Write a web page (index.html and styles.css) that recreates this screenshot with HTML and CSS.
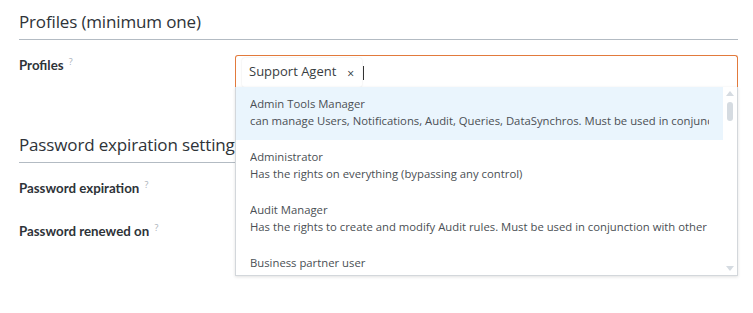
FILE: index.html
```html
<!DOCTYPE html>
<html>
<head>
<meta charset="utf-8">
<link rel="stylesheet" href="styles.css">
</head>
<body>
<div class="page">
  <section class="section">
    <h2 class="section-title">Profiles (minimum one)</h2>
    <div class="row row-profiles">
      <label class="label">Profiles <sup class="help">?</sup></label>
      <div class="field">
        <div class="select">
          <div class="select-input">
            <span class="tag">Support Agent <span class="tag-x">×</span></span>
            <span class="caret"></span>
          </div>
          <div class="dropdown">
            <ul class="options">
              <li class="option active">
                <div class="opt-title">Admin Tools Manager</div>
                <div class="opt-desc">can manage Users, Notifications, Audit, Queries, DataSynchros. Must be used in conjunction with other profiles</div>
              </li>
              <li class="option">
                <div class="opt-title">Administrator</div>
                <div class="opt-desc">Has the rights on everything (bypassing any control)</div>
              </li>
              <li class="option">
                <div class="opt-title">Audit Manager</div>
                <div class="opt-desc">Has the rights to create and modify Audit rules. Must be used in conjunction with other profiles</div>
              </li>
              <li class="option">
                <div class="opt-title">Business partner user</div>
                <div class="opt-desc">Person using the portal</div>
              </li>
            </ul>
            <div class="scrollbar">
              <span class="arrow up"></span>
              <span class="thumb"></span>
              <span class="track"></span>
              <span class="arrow down"></span>
            </div>
          </div>
        </div>
      </div>
    </div>
  </section>
  <section class="section section-2">
    <h2 class="section-title">Password expiration settings</h2>
    <div class="row">
      <label class="label">Password expiration <sup class="help">?</sup></label>
      <div class="field"></div>
    </div>
    <div class="row">
      <label class="label">Password renewed on <sup class="help">?</sup></label>
      <div class="field"></div>
    </div>
  </section>
</div>
</body>
</html>
```

FILE: styles.css
```css
* { box-sizing: border-box; }
html, body { margin: 0; padding: 0; background: #fff; }
body {
  font-family: "Open Sans", "Noto Sans", sans-serif;
  color: #2e3338;
  width: 753px;
  height: 313px;
  overflow: hidden;
}
.page {
  padding: 10px 15px 0 19px;
}
.section-title {
  margin: 0;
  font-size: 17px;
  font-weight: 400;
  line-height: 24px;
  padding-bottom: 5px;
  border-bottom: 1px solid #b3bbc3;
  color: #2e3338;
  letter-spacing: -0.15px;
}
.section-2 {
  margin-top: 46px;
}
.row {
  display: grid;
  grid-template-columns: 216px 1fr;
  margin-top: 12px;
  min-height: 27px;
}
.row-profiles {
  margin-top: 15px;
}
.row-profiles .label { margin-top: -3px; }
.section-2 .row + .row { margin-top: 16px; }
.label {
  font-family: "Lato", "Open Sans", sans-serif;
  font-size: 13.3px;
  font-weight: 700;
  color: #2e3338;
  line-height: 18px;
  padding-top: 1px;
}
.help {
  font-family: "Open Sans", sans-serif;
  font-size: 9px;
  font-weight: 400;
  color: #a8b0b8;
  vertical-align: 5px;
  margin-left: 2px;
}
.field { position: relative; }
.select {
  position: relative;
  width: 503px;
}
.select-input {
  height: 32px;
  border: 1px solid #e27a3c;
  border-bottom: none;
  border-radius: 3px 3px 0 0;
  display: flex;
  align-items: flex-start;
  padding: 1px 6px 0 6px;
  background: #fff;
}
.tag {
  display: inline-flex;
  align-items: flex-start;
  height: 29px;
  padding: 4px 8px 0 7px;
  line-height: 18px;
  font-size: 13px;
  color: #383d42;
  background: #fff;
  border-radius: 3px;
  box-shadow: 0 0 2px rgba(0,0,0,0.12);
  margin-top: 1px;
}
.tag-x {
  font-size: 12px;
  margin-left: 11px;
  margin-top: 3px;
  color: #2e3338;
}
.caret {
  display: inline-block;
  width: 1px;
  height: 14px;
  background: #333;
  margin-left: 1px;
  margin-top: 9px;
}
.dropdown {
  position: absolute;
  left: 0;
  top: 32px;
  width: 503px;
  height: 189px;
  background: #fff;
  border: 1px solid #d3d7db;
  border-top: none;
  box-shadow: 0 1px 3px rgba(0,0,0,0.12);
  display: flex;
  overflow: hidden;
  z-index: 5;
}
.options {
  list-style: none;
  margin: 0;
  padding: 0;
  flex: 1;
  min-width: 0;
}
.option {
  height: 53px;
  padding: 8px 14px 0 14px;
  font-size: 11.3px;
  line-height: 17px;
  color: #4a4f54;
  white-space: nowrap;
  overflow: hidden;
}
.option.active { background: #eaf5fd; }
.opt-title, .opt-desc { overflow: hidden; }
.scrollbar {
  width: 14px;
  display: flex;
  flex-direction: column;
  align-items: center;
  padding: 4px 0 4px 0;
}
.arrow {
  width: 0; height: 0;
  border-left: 4px solid transparent;
  border-right: 4px solid transparent;
}
.arrow.up { border-bottom: 5px solid #d5dbe1; }
.arrow.down { border-top: 5px solid #d5dbe1; }
.thumb {
  width: 6px;
  height: 19px;
  border-radius: 3px;
  background: #d5dbe1;
  margin-top: 6px;
}
.track { flex: 1; }
```
